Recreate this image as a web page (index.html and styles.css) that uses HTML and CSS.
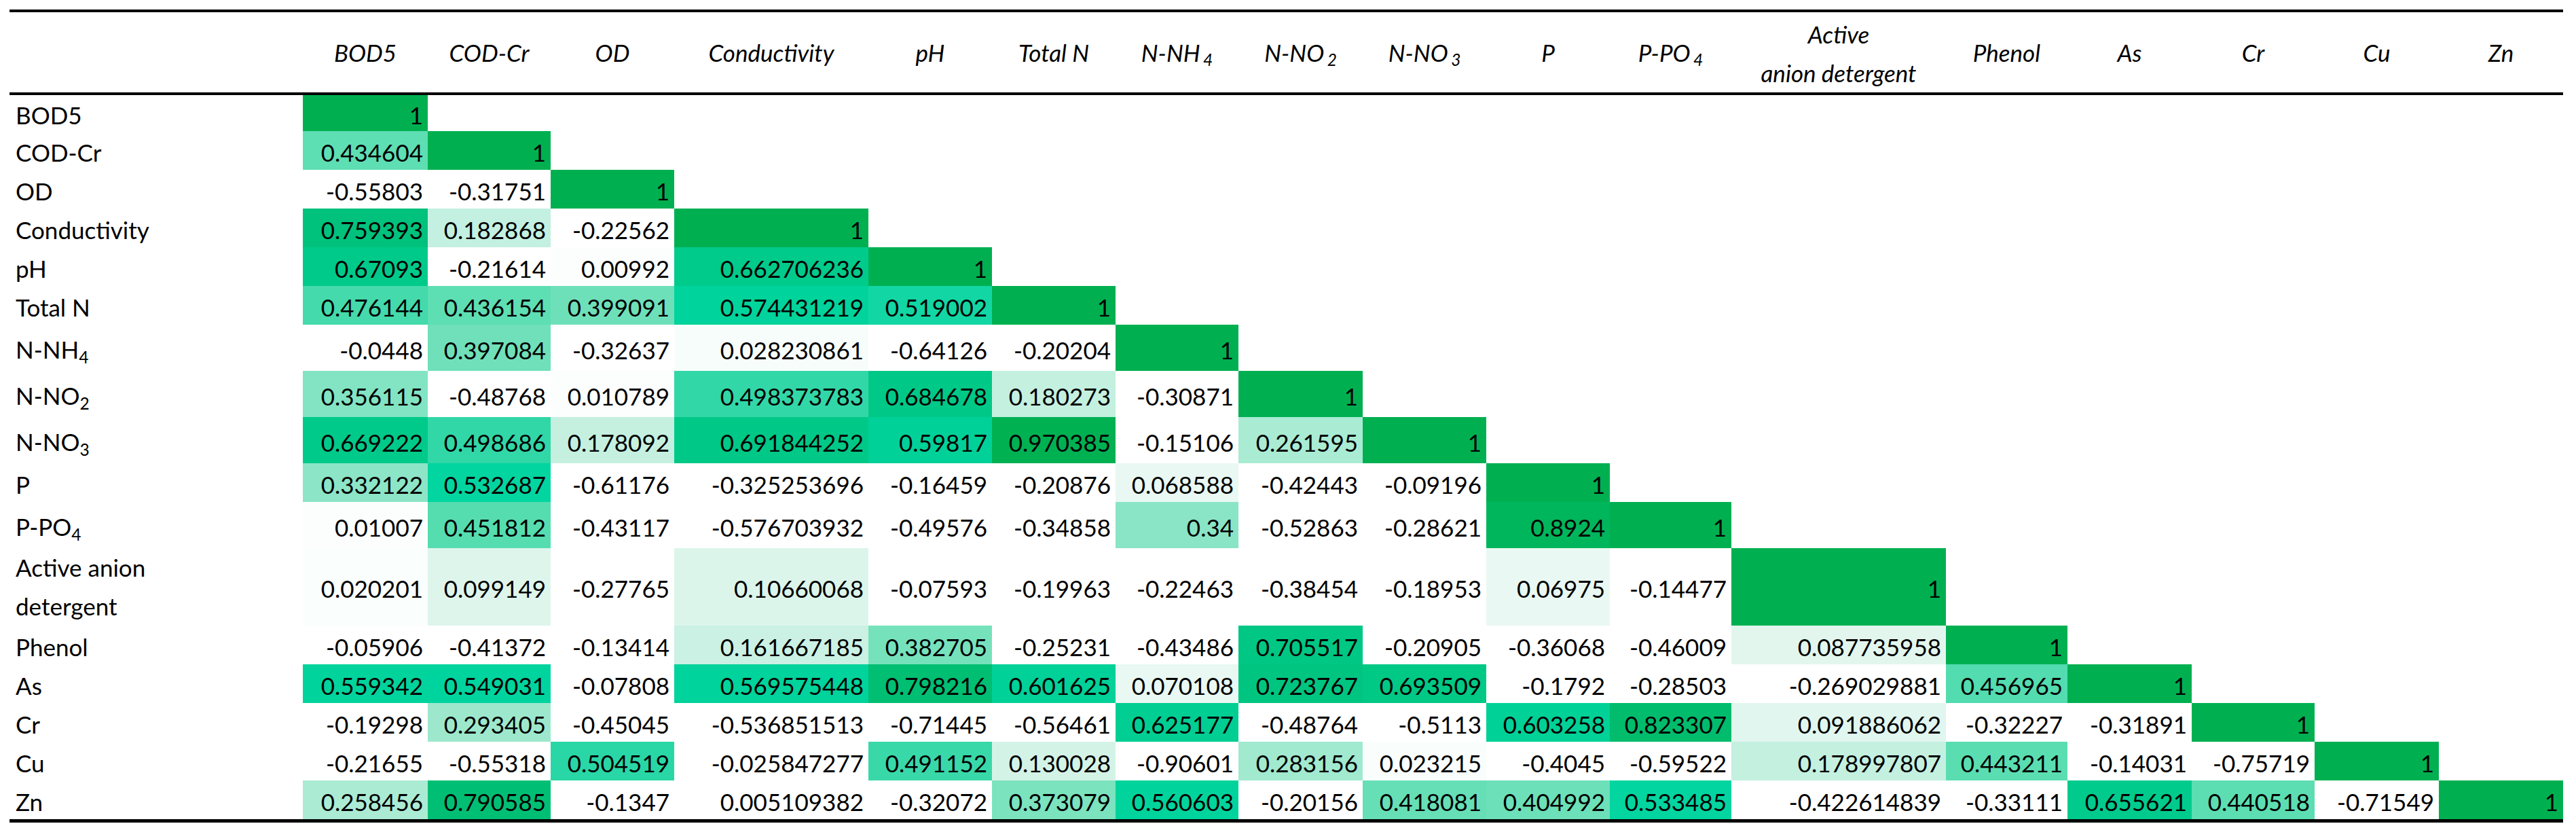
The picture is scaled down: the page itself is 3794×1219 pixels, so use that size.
FILE: index.html
```html
<!DOCTYPE html>
<html lang="en">
<head>
<meta charset="utf-8">
<title>Correlation matrix</title>
<link rel="stylesheet" href="styles.css">
</head>
<body>
<div class="page">
<table class="corr">
  <colgroup>
    <col class="w432"><col class="w184"><col class="w181"><col class="w182"><col class="w286">
    <col class="w182"><col class="w182"><col class="w181"><col class="w183"><col class="w182">
    <col class="w182"><col class="w179"><col class="w316"><col class="w179"><col class="w183">
    <col class="w181"><col class="w183"><col class="w183">
  </colgroup>
  <thead>
    <tr class="hrow">
      <th></th>
      <th>BOD5</th><th>COD-Cr</th><th>OD</th><th>Conductivity</th><th>pH</th><th>Total N</th>
      <th>N-NH<sub class="hsub">4</sub></th><th>N-NO<sub class="hsub">2</sub></th><th>N-NO<sub class="hsub">3</sub></th>
      <th>P</th><th>P-PO<sub class="hsub">4</sub></th><th class="wrapcell">Active<br>anion detergent</th>
      <th>Phenol</th><th>As</th><th>Cr</th><th>Cu</th><th>Zn</th>
    </tr>
  </thead>
  <tbody>
    <tr class="r-first"><td class="lbl">BOD5</td><td class="num">1</td></tr>
    <tr class="r-std"><td class="lbl">COD-Cr</td><td class="num">0.434604</td><td class="num">1</td></tr>
    <tr class="r-std"><td class="lbl">OD</td><td class="num">-0.55803</td><td class="num">-0.31751</td><td class="num">1</td></tr>
    <tr class="r-std"><td class="lbl">Conductivity</td><td class="num">0.759393</td><td class="num">0.182868</td><td class="num">-0.22562</td><td class="num">1</td></tr>
    <tr class="r-std"><td class="lbl">pH</td><td class="num">0.67093</td><td class="num">-0.21614</td><td class="num">0.00992</td><td class="num">0.662706236</td><td class="num">1</td></tr>
    <tr class="r-std"><td class="lbl">Total N</td><td class="num">0.476144</td><td class="num">0.436154</td><td class="num">0.399091</td><td class="num">0.574431219</td><td class="num">0.519002</td><td class="num">1</td></tr>
    <tr class="r-sub"><td class="lbl">N-NH<sub>4</sub></td><td class="num">-0.0448</td><td class="num">0.397084</td><td class="num">-0.32637</td><td class="num">0.028230861</td><td class="num">-0.64126</td><td class="num">-0.20204</td><td class="num">1</td></tr>
    <tr class="r-sub"><td class="lbl">N-NO<sub>2</sub></td><td class="num">0.356115</td><td class="num">-0.48768</td><td class="num">0.010789</td><td class="num">0.498373783</td><td class="num">0.684678</td><td class="num">0.180273</td><td class="num">-0.30871</td><td class="num">1</td></tr>
    <tr class="r-sub"><td class="lbl">N-NO<sub>3</sub></td><td class="num">0.669222</td><td class="num">0.498686</td><td class="num">0.178092</td><td class="num">0.691844252</td><td class="num">0.59817</td><td class="num">0.970385</td><td class="num">-0.15106</td><td class="num">0.261595</td><td class="num">1</td></tr>
    <tr class="r-std"><td class="lbl">P</td><td class="num">0.332122</td><td class="num">0.532687</td><td class="num">-0.61176</td><td class="num">-0.325253696</td><td class="num">-0.16459</td><td class="num">-0.20876</td><td class="num">0.068588</td><td class="num">-0.42443</td><td class="num">-0.09196</td><td class="num">1</td></tr>
    <tr class="r-sub"><td class="lbl">P-PO<sub>4</sub></td><td class="num">0.01007</td><td class="num">0.451812</td><td class="num">-0.43117</td><td class="num">-0.576703932</td><td class="num">-0.49576</td><td class="num">-0.34858</td><td class="num">0.34</td><td class="num">-0.52863</td><td class="num">-0.28621</td><td class="num">0.8924</td><td class="num">1</td></tr>
    <tr class="r-tall"><td class="lbl wrapcell">Active anion<br>detergent</td><td class="num">0.020201</td><td class="num">0.099149</td><td class="num">-0.27765</td><td class="num">0.10660068</td><td class="num">-0.07593</td><td class="num">-0.19963</td><td class="num">-0.22463</td><td class="num">-0.38454</td><td class="num">-0.18953</td><td class="num">0.06975</td><td class="num">-0.14477</td><td class="num">1</td></tr>
    <tr class="r-std"><td class="lbl">Phenol</td><td class="num">-0.05906</td><td class="num">-0.41372</td><td class="num">-0.13414</td><td class="num">0.161667185</td><td class="num">0.382705</td><td class="num">-0.25231</td><td class="num">-0.43486</td><td class="num">0.705517</td><td class="num">-0.20905</td><td class="num">-0.36068</td><td class="num">-0.46009</td><td class="num">0.087735958</td><td class="num">1</td></tr>
    <tr class="r-std"><td class="lbl">As</td><td class="num">0.559342</td><td class="num">0.549031</td><td class="num">-0.07808</td><td class="num">0.569575448</td><td class="num">0.798216</td><td class="num">0.601625</td><td class="num">0.070108</td><td class="num">0.723767</td><td class="num">0.693509</td><td class="num">-0.1792</td><td class="num">-0.28503</td><td class="num">-0.269029881</td><td class="num">0.456965</td><td class="num">1</td></tr>
    <tr class="r-std"><td class="lbl">Cr</td><td class="num">-0.19298</td><td class="num">0.293405</td><td class="num">-0.45045</td><td class="num">-0.536851513</td><td class="num">-0.71445</td><td class="num">-0.56461</td><td class="num">0.625177</td><td class="num">-0.48764</td><td class="num">-0.5113</td><td class="num">0.603258</td><td class="num">0.823307</td><td class="num">0.091886062</td><td class="num">-0.32227</td><td class="num">-0.31891</td><td class="num">1</td></tr>
    <tr class="r-std"><td class="lbl">Cu</td><td class="num">-0.21655</td><td class="num">-0.55318</td><td class="num">0.504519</td><td class="num">-0.025847277</td><td class="num">0.491152</td><td class="num">0.130028</td><td class="num">-0.90601</td><td class="num">0.283156</td><td class="num">0.023215</td><td class="num">-0.4045</td><td class="num">-0.59522</td><td class="num">0.178997807</td><td class="num">0.443211</td><td class="num">-0.14031</td><td class="num">-0.75719</td><td class="num">1</td></tr>
    <tr class="r-last"><td class="lbl">Zn</td><td class="num">0.258456</td><td class="num">0.790585</td><td class="num">-0.1347</td><td class="num">0.005109382</td><td class="num">-0.32072</td><td class="num">0.373079</td><td class="num">0.560603</td><td class="num">-0.20156</td><td class="num">0.418081</td><td class="num">0.404992</td><td class="num">0.533485</td><td class="num">-0.422614839</td><td class="num">-0.33111</td><td class="num">0.655621</td><td class="num">0.440518</td><td class="num">-0.71549</td><td class="num">1</td></tr>
  </tbody>
</table>
</div>
<script src="script.js"></script>
</body>
</html>
```

FILE: styles.css
```css
html, body {
  margin: 0;
  padding: 0;
  background: #ffffff;
}

body {
  font-family: Lato, "Open Sans", "Liberation Sans", sans-serif;
  color: #000000;
}

.page {
  padding: 14px 0 0 14px;
}

.corr {
  border-collapse: separate;
  border-spacing: 0;
  table-layout: fixed;
  width: 3761px;
  font-size: 35px;
}

.w432 { width: 432px; }
.w184 { width: 184px; }
.w183 { width: 183px; }
.w182 { width: 182px; }
.w181 { width: 181px; }
.w179 { width: 179px; }
.w286 { width: 286px; }
.w316 { width: 316px; }

.hrow { height: 117px; }

.corr th {
  border-top: 4px solid #000;
  border-bottom: 4px solid #000;
  padding: 0;
  font-style: italic;
  font-weight: normal;
  text-align: center;
  vertical-align: middle;
  line-height: 57px;
  white-space: nowrap;
}

.corr th.wrapcell {
  white-space: normal;
  padding-top: 4px;
}

.corr sub {
  font-size: 0.7em;
  line-height: 0;
  vertical-align: -0.28em;
}

.corr sub.hsub {
  margin-left: 0.18em;
}

.corr td {
  padding: 4px 0 0 0;
  vertical-align: middle;
  line-height: 40px;
  white-space: nowrap;
}

.corr td.lbl {
  text-align: left;
  padding-left: 9px;
}

.corr td.num {
  text-align: right;
  padding-right: 7px;
}

.corr td.wrapcell {
  line-height: 57px;
  white-space: normal;
  padding-top: 0;
}

.r-first { height: 53px; }
.r-std { height: 57px; }
.r-sub { height: 68px; }
.r-tall { height: 114px; }
.r-last { height: 62px; }

.r-last td {
  border-bottom: 5px solid #000;
}

.r-sub td.num {
  padding-top: 6px;
}
```

FILE: script.js
```js
(function () {
  var stops = [
    [0, 255, 255, 255],
    [0.03, 247, 253, 251],
    [0.07, 233, 248, 242],
    [0.10, 222, 245, 236],
    [0.13, 212, 243, 231],
    [0.18, 196, 240, 224],
    [0.26, 171, 235, 212],
    [0.29, 158, 232, 206],
    [0.34, 137, 229, 197],
    [0.37, 124, 227, 191],
    [0.40, 110, 224, 185],
    [0.44, 92, 222, 178],
    [0.46, 80, 220, 174],
    [0.49, 58, 216, 169],
    [0.50, 48, 215, 167],
    [0.52, 16, 214, 163],
    [0.535, 0, 213, 160],
    [0.56, 0, 212, 156],
    [0.60, 0, 209, 152],
    [0.66, 0, 203, 140],
    [0.70, 0, 199, 132],
    [0.76, 0, 194, 124],
    [0.80, 0, 190, 114],
    [0.83, 0, 187, 106],
    [0.89, 0, 182, 92],
    [0.97, 0, 177, 82],
    [1, 0, 176, 80]
  ];
  function colour(v) {
    if (!(v > 0)) return null;
    if (v >= 1) return 'rgb(0,176,80)';
    for (var i = 1; i < stops.length; i++) {
      var b = stops[i];
      if (v <= b[0]) {
        var a = stops[i - 1];
        var t = (v - a[0]) / (b[0] - a[0]);
        var r = Math.round(a[1] + (b[1] - a[1]) * t);
        var g = Math.round(a[2] + (b[2] - a[2]) * t);
        var bl = Math.round(a[3] + (b[3] - a[3]) * t);
        return 'rgb(' + r + ',' + g + ',' + bl + ')';
      }
    }
    return null;
  }
  var cells = document.querySelectorAll('td.num');
  for (var i = 0; i < cells.length; i++) {
    var c = colour(parseFloat(cells[i].textContent));
    if (c) cells[i].style.backgroundColor = c;
  }
})();
```
